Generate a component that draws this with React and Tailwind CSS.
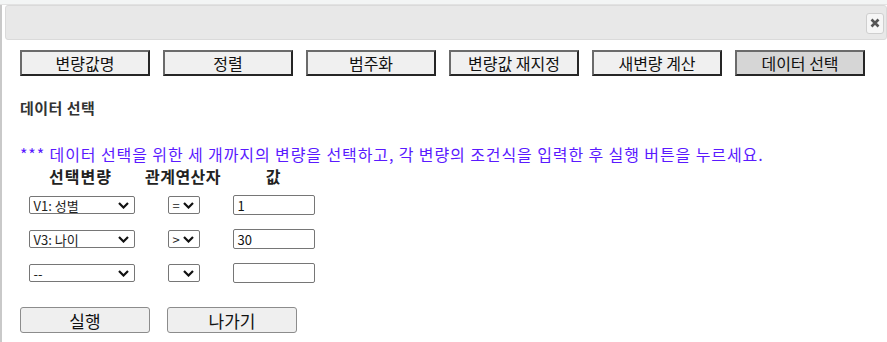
import { useState } from 'react';

const FONT = "font-['Noto_Sans_CJK_KR','Noto_Sans',sans-serif]";

const tabs = ['변량값명', '정렬', '범주화', '변량값 재지정', '새변량 계산', '데이터 선택'];

function Chevron() {
    return (
        <svg width="11" height="7" viewBox="0 0 11 7" className="shrink-0">
            <path d="M1 1 L5.5 5.5 L10 1" fill="none" stroke="#111" strokeWidth="2.2" />
        </svg>
    );
}

function FakeSelect({ value, width }) {
    return (
        <div
            className={`h-[18px] ${width} flex items-center justify-between pl-[4px] pr-[5px] border border-[#767676] rounded-[2px] bg-white text-[13px] leading-none text-[#222] ${FONT}`}
        >
            <span className="whitespace-nowrap">{value}</span>
            <Chevron />
        </div>
    );
}

export default function App() {
    const [rows] = useState([
        { v: 'V1: 성별', op: '=', val: '1' },
        { v: 'V3: 나이', op: '>', val: '30' },
        { v: '--', op: '', val: '' },
    ]);

    return (
        <div className={`w-[887px] h-[342px] overflow-hidden bg-white relative ${FONT}`}>
            {/* page behind the dialog */}
            <div className="h-[5px] bg-[#f3f5f5] border-b border-[#e2e2e2]" />
            <div className="h-[337px] border-l-2 border-[#c9c9c9]">
                {/* title bar */}
                <div className="ml-[3px] h-[35px] bg-[#e8e8e8] border border-[#dadada] rounded-[3px] flex items-center justify-end pr-[2px]">
                    <div className="w-[18px] h-[21px] mt-[1px] bg-[#f6f6f6] border border-[#cfcfcf] rounded-[3px] flex items-center justify-center">
                        <svg width="10" height="10" viewBox="0 0 10 10">
                            <path d="M1.5 1.5 L8.5 8.5 M8.5 1.5 L1.5 8.5" stroke="#555" strokeWidth="2.6" />
                        </svg>
                    </div>
                </div>

                <div className="pl-[18px]">
                    {/* tab buttons */}
                    <div className="flex gap-[13px] mt-[10px]">
                        {tabs.map((t, i) => (
                            <div
                                key={t}
                                className={`w-[130px] h-[26px] flex items-center justify-center border-2 border-[#6b6b6b] border-r-[#262626] border-b-[#262626] text-[16px] leading-none text-[#111] ${i === tabs.length - 1 ? 'bg-[#d6d6d6]' : 'bg-[#f0f0f0]'}`}
                            >
                                {t}
                            </div>
                        ))}
                    </div>

                    <h3 className="mt-[22px] text-[15px] font-bold text-[#333] leading-[20px] tracking-[0.5px]">데이터 선택</h3>

                    <p className="mt-[26px] text-[16px] leading-[20px] text-[#5a1aff] whitespace-nowrap tracking-[0.9px]">
                        *** 데이터 선택을 위한 세 개까지의 변량을 선택하고, 각 변량의 조건식을 입력한 후 실행 버튼을 누르세요.
                    </p>

                    <div className="grid grid-cols-[121px_84px_96px] mt-[1px]">
                        <div className="text-center text-[16px] font-bold text-[#222] leading-[22px] tracking-[1px]">선택변량</div>
                        <div className="text-center text-[16px] font-bold text-[#222] leading-[22px] tracking-[0.5px]">관계연산자</div>
                        <div className="text-center text-[16px] font-bold text-[#222] leading-[22px]">값</div>
                        {rows.map((r, i) => (
                            <div key={i} className="contents">
                                <div className="flex justify-center h-[34px] items-start pt-[9px] pl-[2px]">
                                    <FakeSelect value={r.v} width="w-[106px]" />
                                </div>
                                <div className="flex justify-center h-[34px] items-start pt-[9px] pl-[1px]">
                                    <FakeSelect value={r.op} width="w-[32px]" />
                                </div>
                                <div className="flex justify-center h-[34px] items-start pt-[8px] pl-[1px]">
                                    <div className="w-[82px] h-[20px] border border-[#767676] rounded-[2px] px-[4px] flex items-center text-[13px] text-[#111] leading-none">
                                        {r.val}
                                    </div>
                                </div>
                            </div>
                        ))}
                    </div>

                    {/* action buttons */}
                    <div className="flex gap-[17px] mt-[18px]">
                        <div className="w-[130px] h-[26px] flex items-center justify-center bg-[#efefef] border border-[#8c8c8c] rounded-[3px] text-[17px] text-[#111] leading-none">
                            실행
                        </div>
                        <div className="w-[130px] h-[26px] flex items-center justify-center bg-[#efefef] border border-[#8c8c8c] rounded-[3px] text-[17px] text-[#111] leading-none">
                            나가기
                        </div>
                    </div>
                </div>
            </div>
        </div>
    );
}
